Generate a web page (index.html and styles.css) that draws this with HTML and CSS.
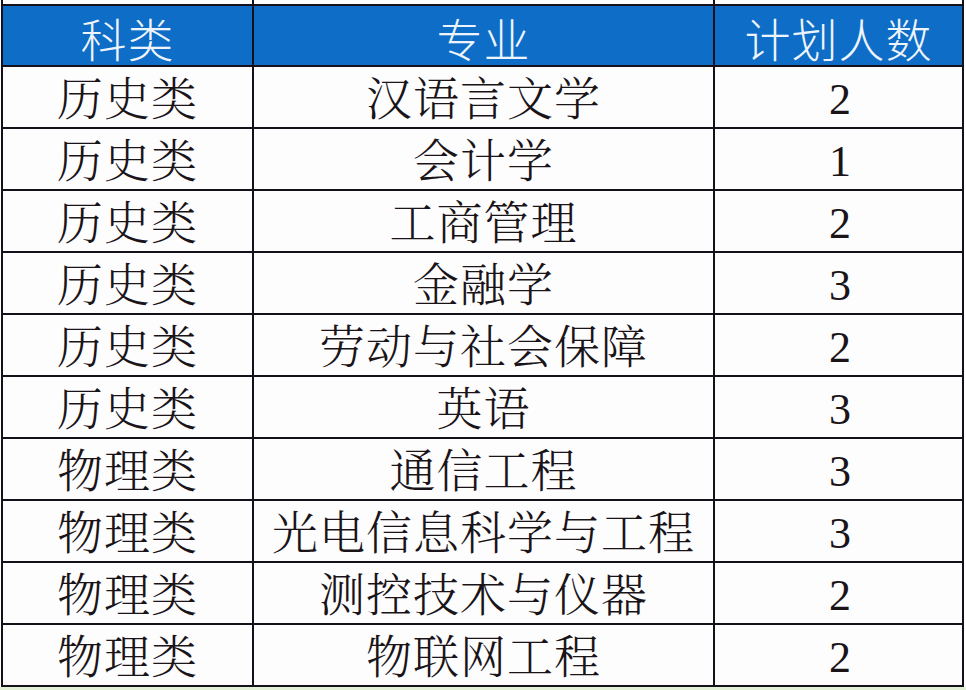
FILE: index.html
```html
<!DOCTYPE html>
<html lang="zh-CN">
<head>
<meta charset="utf-8">
<title>招生计划</title>
<link rel="stylesheet" href="styles.css">
</head>
<body>
<div class="page">
  <div class="sheet">
    <div class="cell top"></div><div class="cell top"></div><div class="cell top"></div>
    <div class="cell head">科类</div><div class="cell head">专业</div><div class="cell head">计划人数</div>
    <div class="cell">历史类</div><div class="cell">汉语言文学</div><div class="cell num">2</div>
    <div class="cell">历史类</div><div class="cell">会计学</div><div class="cell num">1</div>
    <div class="cell">历史类</div><div class="cell">工商管理</div><div class="cell num">2</div>
    <div class="cell">历史类</div><div class="cell">金融学</div><div class="cell num">3</div>
    <div class="cell">历史类</div><div class="cell">劳动与社会保障</div><div class="cell num">2</div>
    <div class="cell">历史类</div><div class="cell">英语</div><div class="cell num">3</div>
    <div class="cell">物理类</div><div class="cell">通信工程</div><div class="cell num">3</div>
    <div class="cell">物理类</div><div class="cell">光电信息科学与工程</div><div class="cell num">3</div>
    <div class="cell">物理类</div><div class="cell">测控技术与仪器</div><div class="cell num">2</div>
    <div class="cell">物理类</div><div class="cell">物联网工程</div><div class="cell num">2</div>
  </div>
  <div class="strip"></div>
</div>
</body>
</html>
```
FILE: styles.css
```css
html, body {
  margin: 0;
  padding: 0;
  background: #ffffff;
}
.page {
  width: 966px;
  height: 690px;
  overflow: hidden;
}
.sheet {
  display: grid;
  grid-template-columns: 249px 459px 247px;
  grid-template-rows: 4px 59px repeat(10, 60px);
  gap: 2px;
  padding: 0 2px 2px 2px;
  margin-left: 1px;
  width: fit-content;
  background: #15111a;
}
.cell {
  background: #fdfdfe;
  display: flex;
  align-items: center;
  justify-content: center;
  padding-top: 5px;
  box-sizing: border-box;
  font-family: "Liberation Serif", "Noto Serif CJK SC Light", "Noto Serif CJK SC", "Noto Sans CJK SC", serif;
  font-size: 46px;
  font-weight: 300;
  letter-spacing: 1px;
  color: #1a1418;
  line-height: 1;
  white-space: nowrap;
}
.cell.top {
  padding: 0;
}
.cell.head {
  background: #0e6dc6;
  color: #eef4fb;
  font-family: "Noto Sans CJK SC Light", "Noto Sans CJK SC", sans-serif;
  font-weight: 300;
  padding-top: 3px;
}
.cell.num {
  font-size: 44px;
  font-weight: 400;
  letter-spacing: 0;
  padding-left: 3px;
}
.strip {
  height: 3px;
  background: #e2f1d6;
}
```
